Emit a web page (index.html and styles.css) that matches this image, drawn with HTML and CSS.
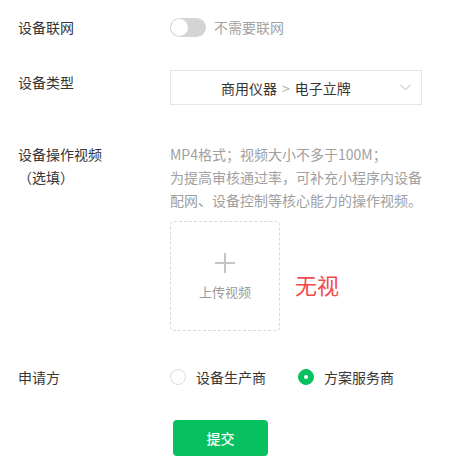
FILE: index.html
```html
<!DOCTYPE html>
<html lang="zh">
<head>
<meta charset="utf-8">
<link rel="stylesheet" href="styles.css">
</head>
<body>
<div class="form">
  <div class="row row-net">
    <div class="label">设备联网</div>
    <div class="field switch-field">
      <span class="switch"><span class="knob"></span></span>
      <span class="switch-text">不需要联网</span>
    </div>
  </div>

  <div class="row row-type">
    <div class="label">设备类型</div>
    <div class="field">
      <div class="select">
        <span class="select-text">商用仪器<span class="sep">&gt;</span>电子立牌</span>
        <svg class="chev" width="11" height="7" viewBox="0 0 11 7"><path d="M0.5 0.8 L5.5 5.8 L10.5 0.8" fill="none" stroke="#b5b5b5" stroke-width="1"/></svg>
      </div>
    </div>
  </div>

  <div class="row row-video">
    <div class="label">设备操作视频<br>（选填）</div>
    <div class="field">
      <div class="hint">MP4格式；视频大小不多于100M；<br>为提高审核通过率，可补充小程序内设备<br>配网、设备控制等核心能力的操作视频。</div>
      <div class="upload-line">
        <div class="upload">
          <svg class="plus" width="20" height="20" viewBox="0 0 20 20"><path d="M10 0 V20 M0 10 H20" stroke="#c4c4c4" stroke-width="2"/></svg>
          <span class="upload-text">上传视频</span>
        </div>
        <span class="note">无视</span>
      </div>
    </div>
  </div>

  <div class="row row-apply">
    <div class="label">申请方</div>
    <div class="field radios">
      <label class="radio"><span class="dot"></span>设备生产商</label>
      <label class="radio checked"><span class="dot"></span>方案服务商</label>
    </div>
  </div>

  <div class="row row-submit">
    <div class="label"></div>
    <div class="field"><button class="btn">提交</button></div>
  </div>
</div>
</body>
</html>
```

FILE: styles.css
```css
* { box-sizing: border-box; }
html, body { margin: 0; padding: 0; background: #fff; }
body {
  font-family: "Noto Sans CJK SC", "Noto Sans", sans-serif;
  font-size: 14px;
  color: #353535;
}
.form { padding: 0 18px; }
.row { display: flex; }
.label { width: 152px; flex: none; line-height: 20px; }
.field { flex: 1; }

.row-net { padding-top: 17px; }
.switch-field { display: flex; align-items: center; height: 20px; }
.switch {
  width: 36px; height: 19px; border-radius: 10px;
  background: #d4d4d4; position: relative; flex: none;
}
.knob {
  position: absolute; left: 1px; top: 1px;
  width: 17px; height: 17px; border-radius: 50%;
  background: #fff;
}
.switch-text { margin-left: 8px; color: #a3a3a3; }

.row-type { margin-top: 33px; }
.row-type .label { padding-top: 2px; }
.select {
  width: 252px; height: 35px;
  border: 1px solid #e6e6e6;
  display: flex; align-items: center;
  padding-left: 50px; padding-right: 10px;
}
.select-text { flex: 1; color: #353535; }
.sep { color: #b0b0b0; margin: 0 5px; }
.chev { flex: none; }

.row-video { margin-top: 38px; }
.row-video .label { line-height: 23px; }
.hint { color: #a0a0a0; line-height: 23px; }
.upload-line { display: flex; align-items: center; margin-top: 9px; }
.upload {
  width: 110px; height: 110px;
  border: 1px dashed #d9d9d9; border-radius: 4px;
  display: flex; flex-direction: column; align-items: center;
  padding-top: 31px;
}
.upload-text { color: #9a9a9a; font-size: 13px; margin-top: 9px; }
.note { color: #f24a4a; font-size: 22px; margin-left: 15px; margin-top: 16px; }

.row-apply { margin-top: 36px; }
.radios { display: flex; align-items: center; height: 20px; }
.radio { display: flex; align-items: center; margin-right: 32px; }
.dot {
  width: 16px; height: 16px; border-radius: 50%;
  border: 1px solid #dcdcdc; margin-right: 10px; position: relative; flex: none;
}
.radio.checked .dot { background: #07c160; border-color: #07c160; }
.radio.checked .dot::after {
  content: ""; position: absolute; left: 5px; top: 5px;
  width: 4px; height: 4px; border-radius: 50%; background: #fff;
}

.row-submit { margin-top: 33px; }
.btn {
  margin-left: 3px;
  width: 95px; height: 36px; border: 0; border-radius: 4px;
  background: #07c160; color: #fff;
  font-family: inherit; font-size: 14px; font-weight: 500;
}
```
